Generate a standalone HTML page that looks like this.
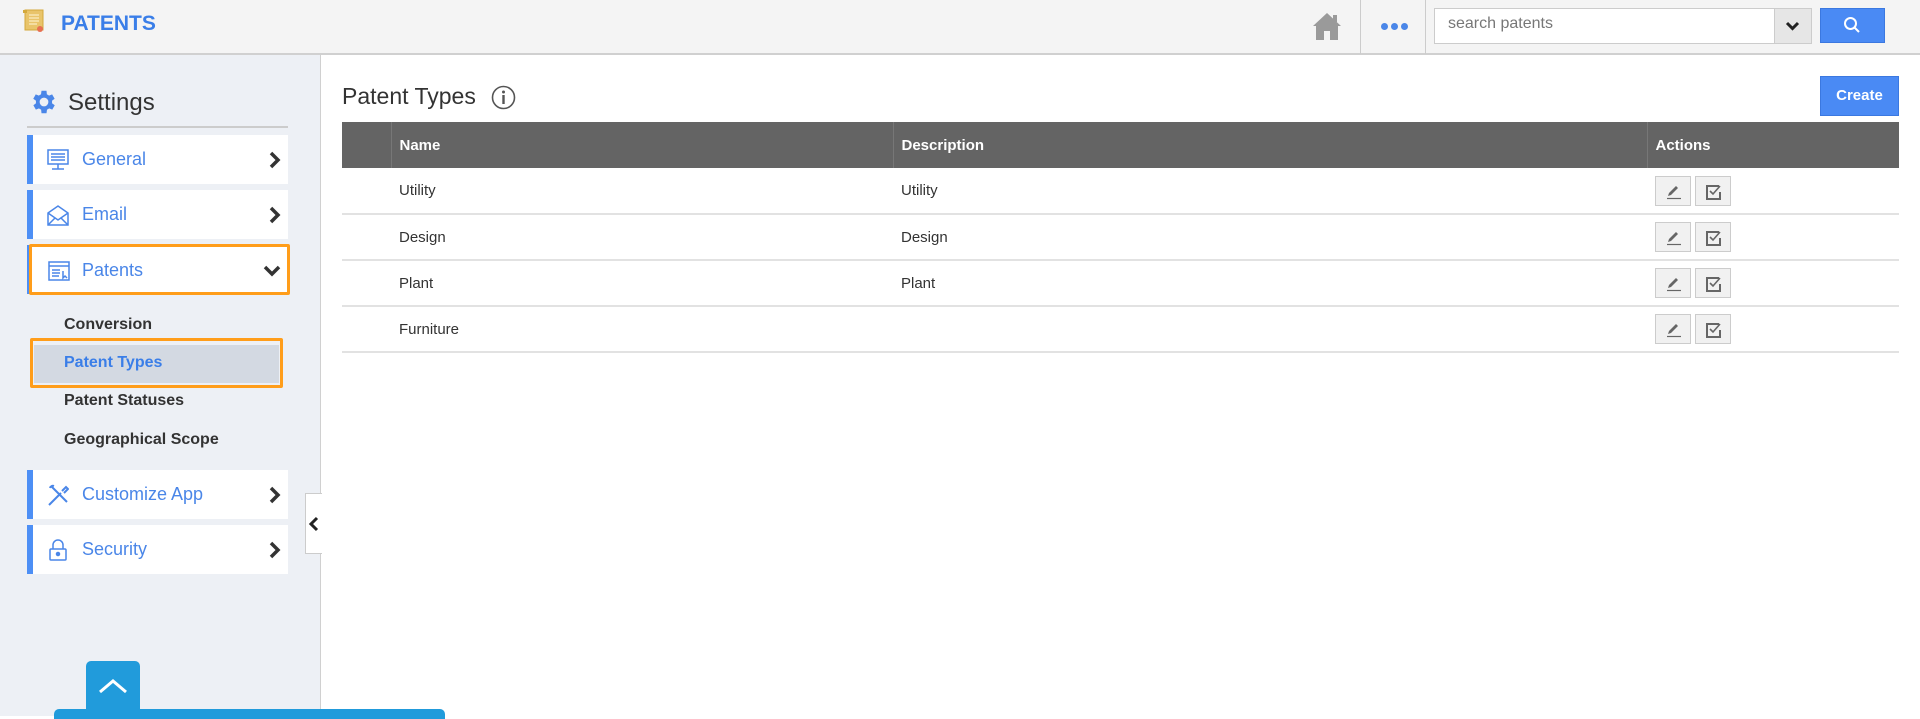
<!DOCTYPE html>
<html><head><meta charset="utf-8"><style>
*{box-sizing:border-box;margin:0;padding:0}
body{width:1920px;height:716px;overflow:hidden;font-family:"Liberation Sans",Arial,sans-serif;background:#fff;position:relative}
.abs{position:absolute}
#hdr{left:0;top:0;width:1920px;height:55px;background:#f4f4f4;border-bottom:2px solid #d0d0d0}
#side{left:0;top:55px;width:321px;height:661px;background:#edf0f5;border-right:1px solid #d0d0d0}
.card{position:absolute;left:27px;width:261px;height:49px;background:#fff;border-left:6px solid #4d8ff5}
.card .t{position:absolute;left:49px;top:14px;font-size:18px;color:#4a86e8}
.card .ic{position:absolute;left:14px;top:14px}
.card .ch{position:absolute;right:6px;top:16px}
.sub{position:absolute;left:64px;font-size:16px;font-weight:bold;color:#333}
th{background:#646464;color:#fff;font-size:15px;text-align:left;font-weight:bold;height:46px;padding-left:8px;border-left:1px solid #777}
td{height:46px;border-bottom:2px solid #e2e2e2;font-size:15px;color:#333;padding-left:8px}
table{border-collapse:collapse;position:absolute;left:342px;top:122px;width:1557px}
.ab{display:inline-block;width:36px;height:30px;background:#f1f1f1;border:1px solid #ccc;margin-right:4px;vertical-align:middle;position:relative}
</style></head><body>
<div id="hdr" class="abs">
 <svg class="abs" style="left:22px;top:9px" width="24" height="24" viewBox="0 0 24 24"><rect x="3" y="1" width="18" height="20" fill="#e9c46a" stroke="#d4a93c"/><rect x="1" y="1" width="4" height="3" fill="#d4a93c"/><line x1="7" y1="6" x2="17" y2="6" stroke="#fff6d6"/><line x1="7" y1="9" x2="17" y2="9" stroke="#fff6d6"/><line x1="7" y1="12" x2="17" y2="12" stroke="#fff6d6"/><line x1="7" y1="15" x2="15" y2="15" stroke="#fff6d6"/><circle cx="18" cy="20" r="3" fill="#e76f51"/></svg>
 <div class="abs" style="left:61px;top:12px;font-size:21px;font-weight:bold;color:#3a7ee8">PATENTS</div>
 <svg class="abs" style="left:1312px;top:11px" width="30" height="30" viewBox="0 0 30 30"><path d="M15 2 L1 15 L4 15 L4 29 L12 29 L12 20 L18 20 L18 29 L26 29 L26 15 L29 15 Z" fill="#9a9a9a"/><rect x="21" y="4" width="4" height="7" fill="#9a9a9a"/></svg>
 <div class="abs" style="left:1360px;top:0;width:66px;height:54px;border-left:1px solid #ccc;border-right:1px solid #ccc"></div>
 <div class="abs" style="left:1381px;top:23px;font-size:0">
  <span style="display:inline-block;width:7px;height:7px;border-radius:50%;background:#4a86e8;margin-right:3px"></span><span style="display:inline-block;width:7px;height:7px;border-radius:50%;background:#4a86e8;margin-right:3px"></span><span style="display:inline-block;width:7px;height:7px;border-radius:50%;background:#4a86e8"></span></div>
 <div class="abs" style="left:1434px;top:8px;width:378px;height:36px;background:#fff;border:1px solid #ccc"></div>
 <div class="abs" style="left:1448px;top:15px;font-size:16px;color:#777">search patents</div>
 <div class="abs" style="left:1774px;top:9px;width:37px;height:34px;background:#e6e6e6;border-left:1px solid #ccc"></div>
 <svg class="abs" style="left:1785px;top:20px" width="15" height="12" viewBox="0 0 15 12"><path d="M2 3 L7.5 8.5 L13 3" stroke="#222" stroke-width="3" fill="none"/></svg>
 <div class="abs" style="left:1820px;top:8px;width:65px;height:35px;background:#4a8af4;border:1px solid #3b78e0"></div>
 <svg class="abs" style="left:1843px;top:16px" width="18" height="18" viewBox="0 0 18 18"><circle cx="7.5" cy="7.5" r="5.5" stroke="#fff" stroke-width="2" fill="none"/><line x1="11.5" y1="11.5" x2="16" y2="16" stroke="#fff" stroke-width="2"/></svg>
</div>

<div id="side" class="abs">
 <svg class="abs" style="left:29px;top:32px" width="30" height="30" viewBox="0 0 24 24"><path fill="#4a86e8" d="M19.4 13a7.5 7.5 0 000-2l2.1-1.6-2-3.5-2.5 1a7.4 7.4 0 00-1.7-1L15 3h-4l-.4 2.9a7.4 7.4 0 00-1.7 1l-2.5-1-2 3.5L6.6 11a7.5 7.5 0 000 2l-2.1 1.6 2 3.5 2.5-1a7.4 7.4 0 001.7 1L11 21h4l.4-2.9a7.4 7.4 0 001.7-1l2.5 1 2-3.5zM13 15.5a3.5 3.5 0 110-7 3.5 3.5 0 010 7z" transform="translate(-1 0)"/></svg>
 <div class="abs" style="left:68px;top:34px;font-size:24px;color:#333">Settings</div>
 <div class="abs" style="left:27px;top:71px;width:261px;height:2px;background:#ccc"></div>
</div>

<div class="card" style="top:135px"><svg class="ic" width="22" height="22" viewBox="0 0 22 22" fill="none" stroke="#4a86e8" stroke-width="1.5"><rect x="1" y="1" width="20" height="14"/><line x1="4" y1="5" x2="18" y2="5"/><line x1="4" y1="8" x2="18" y2="8"/><line x1="4" y1="11" x2="18" y2="11"/><line x1="11" y1="15" x2="11" y2="20"/><line x1="5" y1="20" x2="17" y2="20"/></svg><div class="t">General</div><svg class="ch" width="14" height="18" viewBox="0 0 14 18"><path d="M3 2 L10 9 L3 16" stroke="#333" stroke-width="3.5" fill="none"/></svg></div>
<div class="card" style="top:190px"><svg class="ic" width="22" height="22" viewBox="0 0 22 22" fill="none" stroke="#4a86e8" stroke-width="1.5"><path d="M1 9 L11 2 L21 9 L21 21 L1 21 Z"/><path d="M1 9 L11 16 L21 9"/><path d="M1 21 L8 14 M21 21 L14 14"/></svg><div class="t">Email</div><svg class="ch" width="14" height="18" viewBox="0 0 14 18"><path d="M3 2 L10 9 L3 16" stroke="#333" stroke-width="3.5" fill="none"/></svg></div>
<div class="card" style="top:245px;border-left:3px solid #4d8ff5"></div>
<div class="abs" style="left:29px;top:244px;width:261px;height:51px;border:3px solid #ff9d1a;border-radius:2px;background:#fff">
 <svg class="abs" style="left:16px;top:13px" width="22" height="22" viewBox="0 0 22 22" fill="none" stroke="#4a86e8" stroke-width="1.5"><rect x="1" y="2" width="20" height="18"/><line x1="1" y1="6" x2="21" y2="6"/><line x1="4" y1="10" x2="12" y2="10"/><line x1="4" y1="13" x2="12" y2="13"/><line x1="4" y1="16" x2="11" y2="16"/><path d="M15 11 L15 18 L17 16 L19 18" /></svg>
 <div class="abs" style="left:50px;top:13px;font-size:18px;color:#4a86e8">Patents</div>
 <svg class="abs" style="left:231px;top:17px" width="18" height="14" viewBox="0 0 18 14"><path d="M2 3 L9 10 L16 3" stroke="#333" stroke-width="3.5" fill="none"/></svg>
</div>
<div class="sub" style="top:316px">Conversion</div>
<div class="abs" style="left:30px;top:338px;width:253px;height:50px;border:3px solid #ff9d1a;border-radius:2px;background:#edf0f5"><div style="position:absolute;left:1px;top:4px;right:1px;bottom:2px;background:#d3d9e2"></div></div>
<div class="sub" style="top:354px;color:#3a7ee8">Patent Types</div>
<div class="sub" style="top:392px">Patent Statuses</div>
<div class="sub" style="top:431px">Geographical Scope</div>
<div class="card" style="top:470px"><svg class="ic" width="22" height="22" viewBox="0 0 22 22" fill="none" stroke="#4a86e8" stroke-width="2"><path d="M2 21 L14 9 M4 2 L20 18 M3 4 a3 3 0 0 1 4 -2"/><path d="M15 7 L19 3 L21 5 L17 9"/></svg><div class="t">Customize App</div><svg class="ch" width="14" height="18" viewBox="0 0 14 18"><path d="M3 2 L10 9 L3 16" stroke="#333" stroke-width="3.5" fill="none"/></svg></div>
<div class="card" style="top:525px"><svg class="ic" width="22" height="22" viewBox="0 0 22 22" fill="none" stroke="#4a86e8" stroke-width="1.5"><rect x="3" y="10" width="16" height="11" rx="1"/><path d="M6 10 V6 a5 5 0 0 1 10 0 V10"/><circle cx="11" cy="15" r="1.5" fill="#4a86e8"/></svg><div class="t">Security</div><svg class="ch" width="14" height="18" viewBox="0 0 14 18"><path d="M3 2 L10 9 L3 16" stroke="#333" stroke-width="3.5" fill="none"/></svg></div>

<div class="abs" style="left:305px;top:493px;width:17px;height:61px;background:#fff;border:1px solid #ccc;border-right:none"></div>
<svg class="abs" style="left:308px;top:516px" width="12" height="16" viewBox="0 0 12 16"><path d="M9 2 L3 8 L9 14" stroke="#222" stroke-width="3" fill="none"/></svg>
<div class="abs" style="left:86px;top:661px;width:54px;height:55px;background:#219bdb;border-radius:5px 5px 0 0"></div>
<svg class="abs" style="left:97px;top:676px" width="32" height="20" viewBox="0 0 32 20"><path d="M3 16 L16 5 L29 16" stroke="#fff" stroke-width="3" fill="none"/></svg>
<div class="abs" style="left:54px;top:709px;width:391px;height:10px;background:#219bdb;border-radius:5px 5px 0 0"></div>

<div class="abs" style="left:342px;top:83px;font-size:23px;color:#333">Patent Types</div>
<svg class="abs" style="left:491px;top:85px" width="25" height="25" viewBox="0 0 25 25"><circle cx="12.5" cy="12.5" r="11" stroke="#555" stroke-width="1.6" fill="none"/><circle cx="12.5" cy="7" r="1.5" fill="#555"/><rect x="11.3" y="10" width="2.4" height="9" fill="#555"/></svg>
<div class="abs" style="left:1820px;top:76px;width:79px;height:40px;background:#4a8af4;border:1px solid #3b78e0;color:#fff;font-weight:bold;font-size:15px;text-align:center;line-height:38px">Create</div>

<table>
<tr><th style="width:49px;border-left:none"></th><th style="width:502px">Name</th><th style="width:754px">Description</th><th>Actions</th></tr>
<tr><td></td><td>Utility</td><td>Utility</td><td>ACT</td></tr>
<tr><td></td><td>Design</td><td>Design</td><td>ACT</td></tr>
<tr><td></td><td>Plant</td><td>Plant</td><td>ACT</td></tr>
<tr><td></td><td>Furniture</td><td></td><td>ACT</td></tr>
</table>
<script>
document.querySelectorAll('td').forEach(function(td){if(td.textContent==='ACT'){td.innerHTML='<span class="ab"><svg style="position:absolute;left:9px;top:7px" width="18" height="16" viewBox="0 0 18 16"><path d="M3 12 L4 9 L11 2 L13 4 L6 11 Z" fill="#666"/><line x1="2" y1="14.5" x2="16" y2="14.5" stroke="#666" stroke-width="1.2"/></svg></span><span class="ab"><svg style="position:absolute;left:9px;top:6px" width="18" height="18" viewBox="0 0 18 18"><path d="M14 3 H2 V16 H15 V9" stroke="#666" stroke-width="2" fill="none"/><path d="M5 8 L8 11 L15 3" stroke="#666" stroke-width="1.6" fill="none"/></svg></span>';}});
</script>
</body></html>
